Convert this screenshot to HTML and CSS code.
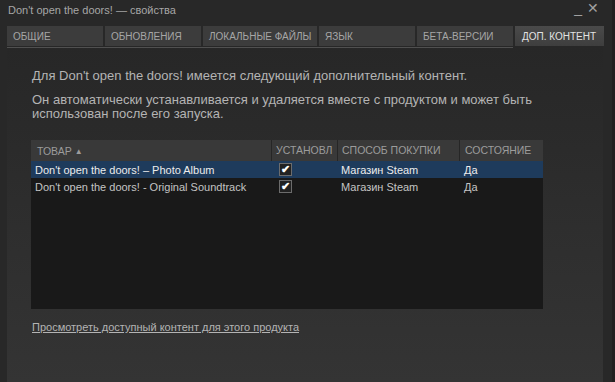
FILE: index.html
```html
<!DOCTYPE html>
<html lang="ru">
<head>
  <meta charset="UTF-8">
  <title>Don't open the doors! — свойства</title>
  <link rel="stylesheet" href="styles.css">
</head>
<body>
  <div class="window">
    <div class="titlebar">
      <span class="title">Don't open the doors! — свойства</span>
      <span class="controls"><span class="min">_</span><span class="close">✕</span></span>
    </div>

    <!-- Tabs -->
    <div class="tabs">
      <div class="tab t1">Общие</div>
      <div class="tab t2">Обновления</div>
      <div class="tab t3">Локальные файлы</div>
      <div class="tab t4">Язык</div>
      <div class="tab t5">Бета-версии</div>
      <div class="tab t6 active">Доп. контент</div>
    </div>

    <div class="panel">
      <p class="intro">Для Don't open the doors! имеется следующий дополнительный контент.</p>
      <p class="intro">Он автоматически устанавливается и удаляется вместе с продуктом и может быть<br>использован после его запуска.</p>

      <div class="list">
        <div class="row head">
          <div class="c-name">Товар <span class="arrow">▲</span></div>
          <div class="c-inst">Установл</div>
          <div class="c-buy">Способ покупки</div>
          <div class="c-state">Состояние</div>
        </div>
        <div class="row item selected">
          <div class="c-name">Don't open the doors! – Photo Album</div>
          <div class="c-inst"><span class="check">✔</span></div>
          <div class="c-buy">Магазин Steam</div>
          <div class="c-state">Да</div>
        </div>
        <div class="row item">
          <div class="c-name">Don't open the doors! - Original Soundtrack</div>
          <div class="c-inst"><span class="check">✔</span></div>
          <div class="c-buy">Магазин Steam</div>
          <div class="c-state">Да</div>
        </div>
      </div>

      <a class="more" href="#">Просмотреть доступный контент для этого продукта</a>
    </div>
  </div>
</body>
</html>
```

FILE: styles.css
```css
body {
  margin: 0;
  background-color: #282828;
  font-family: "Liberation Sans", Arial, sans-serif;
  font-size: 11px;
  color: #b4b4b4;
}
.window {
  height: 382px;
  display: flex;
  flex-direction: column;
  border-right: 3px solid #221f20;
  box-sizing: border-box;
}
.titlebar {
  height: 26px;
  display: flex;
  justify-content: space-between;
  align-items: flex-start;
  padding: 4px 0 0 8px;
  box-sizing: border-box;
}
.title {
  color: #a6a6a6;
}
.controls {
  color: #a0a0a0;
  font-size: 14px;
  margin-right: 13px;
  margin-top: -4px;
}
.controls .min {
  margin-right: 5px;
}
.tabs {
  display: flex;
  gap: 2px;
  margin-left: 7px;
  height: 20px;
}
.tab {
  background-color: #3c3c3c;
  color: #a6a6a6;
  font-size: 10px;
  text-transform: uppercase;
  white-space: nowrap;
  padding: 5px 0 0 6px;
  box-sizing: border-box;
}
.t1 { width: 96px; }
.t2 { width: 96px; }
.t3 { width: 114px; }
.t4 { width: 96px; }
.t5 { width: 96px; }
.t6 { width: 89px; }
.tab.active {
  background: linear-gradient(#4a4a4a, #3e3e3e);
  color: #e2e2e2;
  padding-left: 7px;
}
.panel {
  flex: 1;
  margin: 0 9px 0 7px;
  background: linear-gradient(#272727, #343434);
  padding: 23px 0 0 25px;
  position: relative;
}
.panel::before {
  content: "";
  position: absolute;
  top: 1px;
  left: 0;
  width: 506px;
  height: 1px;
  background-color: #505050;
}
.intro {
  margin: 0 0 10px;
  font-size: 13px;
  line-height: 14px;
}
.list {
  width: 512px;
  height: 169px;
  margin: 19px 0 0 -1px;
  background-color: #191919;
}
.row {
  display: flex;
  align-items: center;
  height: 17px;
  white-space: nowrap;
}
.row > div {
  overflow: hidden;
  text-overflow: clip;
  box-sizing: border-box;
}
.row.head {
  height: 21px;
  background-color: #393939;
  color: #9c9c9c;
  font-size: 10.5px;
  text-transform: uppercase;
}
.row.head > div + div {
  border-left: 1px solid #262626;
  height: 21px;
  line-height: 21px;
}
.row.head .c-name {
  padding-left: 6px;
}
.arrow {
  font-size: 8px;
  vertical-align: 1px;
}
.c-name { width: 240px; padding-left: 4px; }
.c-inst { width: 66px; padding-left: 4px; }
.c-buy { width: 122px; padding-left: 4px; }
.c-state { width: 84px; padding-left: 5px; }
.item .c-inst {
  padding-left: 8px;
}
.item .c-buy {
  padding-left: 4px;
}
.row.item {
  color: #c4c4c4;
}
.row.selected {
  background-color: #1e3b5c;
  color: #ececec;
}
.check {
  display: inline-block;
  width: 11px;
  height: 11px;
  border: 1px solid #6c6c6c;
  background-color: #222;
  color: #fff;
  font-size: 11px;
  font-weight: bold;
  line-height: 11px;
  text-align: center;
  vertical-align: middle;
}
.more {
  display: inline-block;
  margin-top: 12px;
  color: #b4b4b4;
  font-size: 11px;
}
```
